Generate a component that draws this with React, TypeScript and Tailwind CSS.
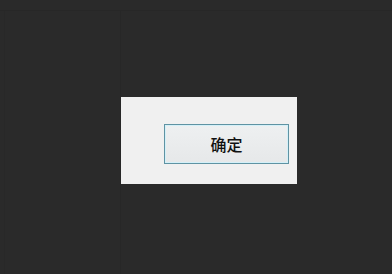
export default function App() {
  return (
    <div className="h-[274px] w-[392px] overflow-hidden bg-[#2a2a2a] pt-[10px]">
      <div className="flex h-[264px] border-t border-[#272727]">
        <div className="w-[121px] shrink-0 border-r border-[#272727] pl-[4px]">
          <div className="h-full border-l border-[#282828]" />
        </div>
        <div className="pt-[86px]">
          <div className="h-[87px] w-[176px] bg-[#f0f0f0] pl-[43px] pt-[27px]">
            <button
              type="button"
              className="flex h-[40px] w-[125px] items-center justify-center border border-[#5f93a3] bg-gradient-to-b from-[#eef0f1] to-[#e6e8e9] pb-[1px] text-[16px] font-medium text-[#111111] shadow-[inset_0_0_0_1px_#d4f0f8]"
              style={{ fontFamily: '"Noto Sans CJK SC", "Liberation Sans", sans-serif' }}
            >
              确定
            </button>
          </div>
        </div>
      </div>
    </div>
  );
}
